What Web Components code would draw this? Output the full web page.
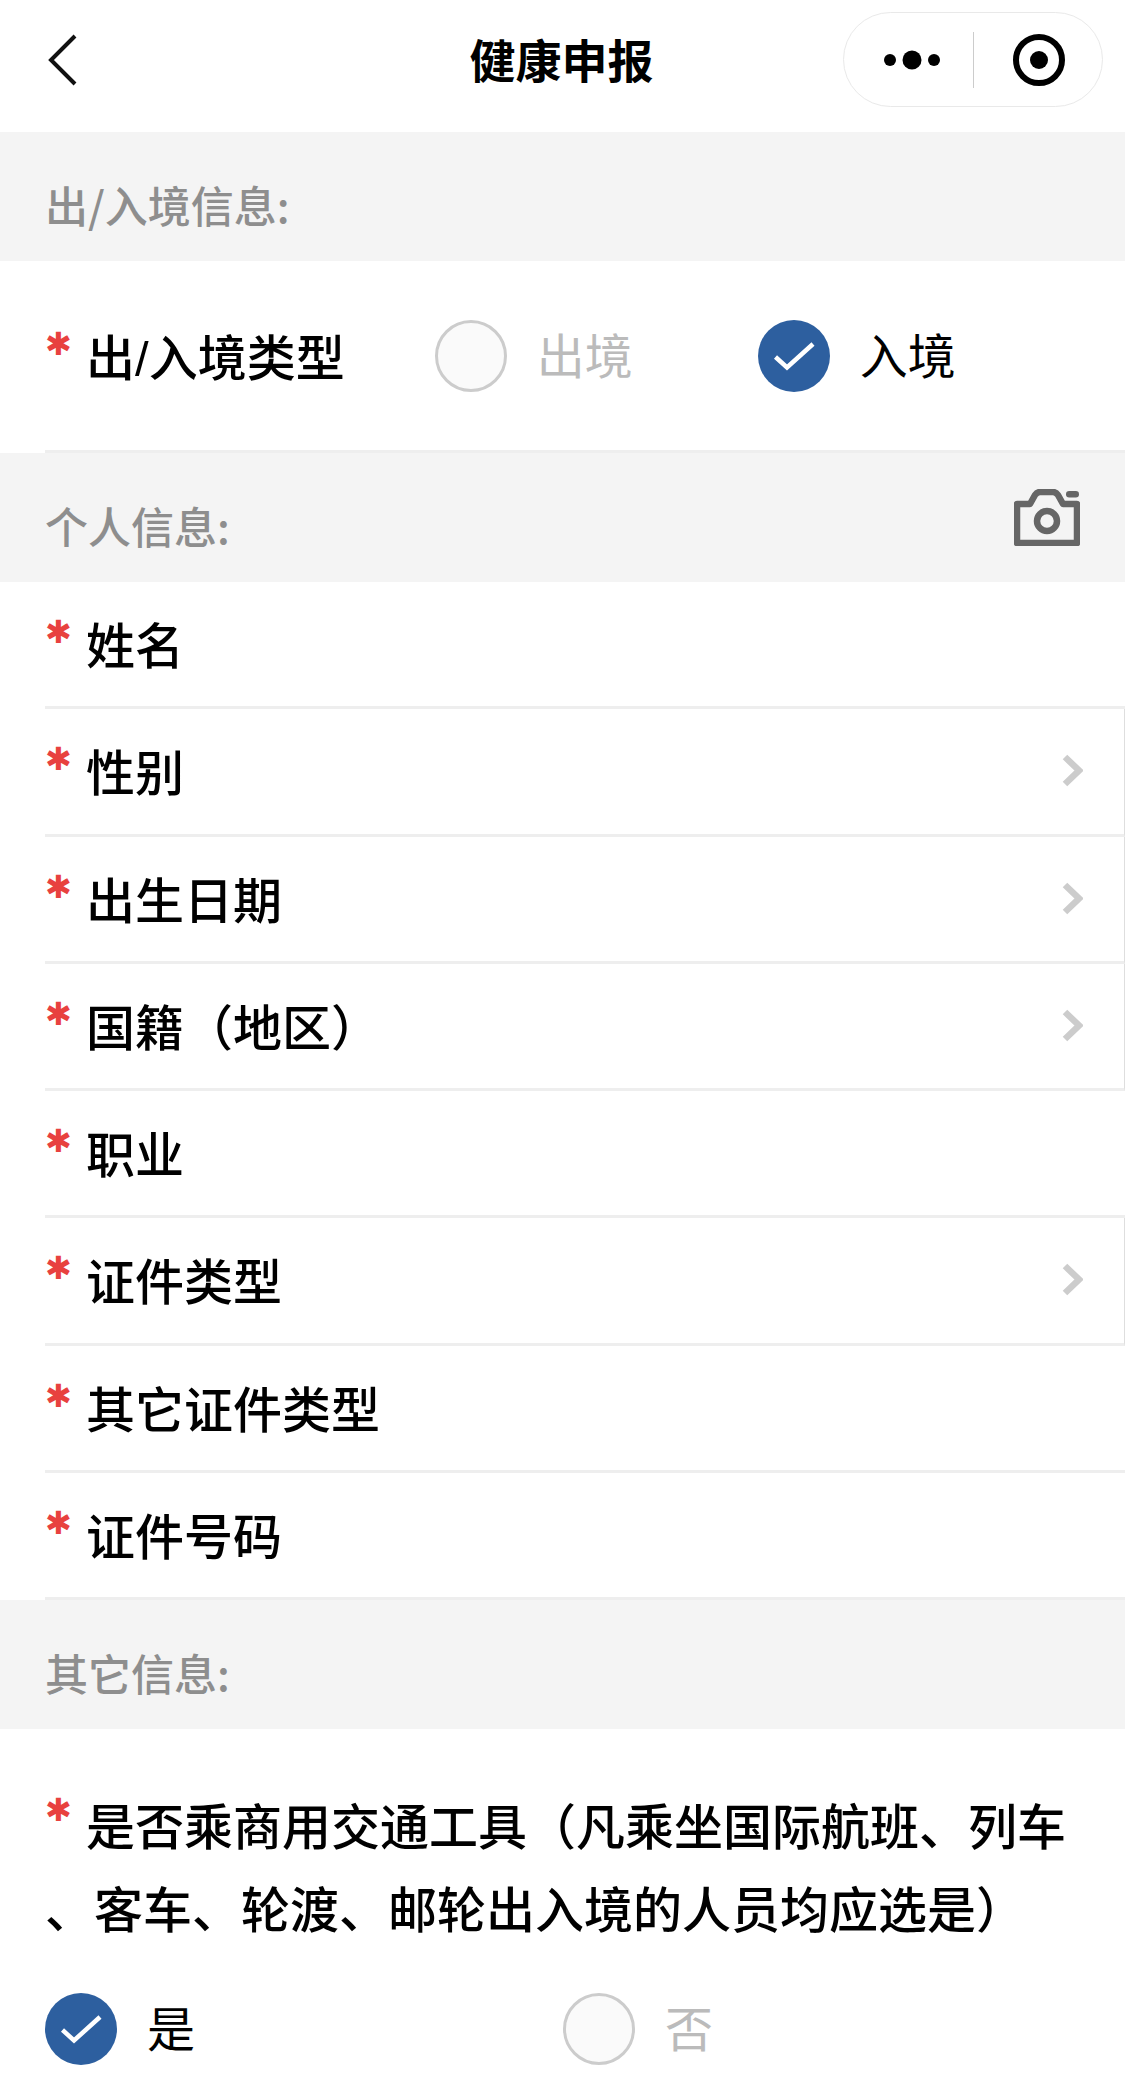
<!DOCTYPE html>
<html lang="zh-CN">
<head>
<meta charset="utf-8">
<style>
  html, body { margin: 0; padding: 0; background: #fff; }
  body {
    width: 1125px;
    height: 2083px;
    overflow: hidden;
    font-family: "Noto Sans CJK SC", "Liberation Sans", sans-serif;
    color: #000;
  }
</style>
</head>
<body>
<nav-bar>健康申报</nav-bar>

<section-title>出/入境信息:</section-title>
<choice-row>
  <span slot="label">出<span style="font-family:'Liberation Sans'">/</span>入境类型</span>
  <radio-option style="margin-left:90px;width:323px">出境</radio-option>
  <radio-option checked>入境</radio-option>
</choice-row>

<section-title camera>个人信息:</section-title>
<field-row>姓名</field-row>
<field-row arrow>性别</field-row>
<field-row arrow>出生日期</field-row>
<field-row arrow>国籍（地区）</field-row>
<field-row>职业</field-row>
<field-row arrow>证件类型</field-row>
<field-row>其它证件类型</field-row>
<field-row>证件号码</field-row>

<section-title>其它信息:</section-title>
<question-block>
  <span slot="first">是否乘商用交通工具（凡乘坐国际航班、列车</span>
  <span slot="second">、客车、轮渡、邮轮出入境的人员均应选是）</span>
  <radio-option checked style="width:518px">是</radio-option>
  <radio-option>否</radio-option>
</question-block>

<script>
  class NavBar extends HTMLElement {
    constructor() {
      super();
      this.attachShadow({ mode: 'open' });
      this.shadowRoot.innerHTML = `
        <style>
          :host { display: flex; position: relative; box-sizing: border-box; height: 132px; padding-top: 28px; background: #fff; justify-content: center; }
          .back { position: absolute; left: 47px; top: 34px; width: 32px; height: 52px; }
          .title { font-size: 46px; font-weight: 700; line-height: 60px; margin-left: -2px; }
          .capsule {
            position: absolute; left: 843px; top: 12px; width: 260px; height: 95px;
            box-sizing: border-box; border: 1px solid #e9e9e9; border-radius: 48px; padding-top: 1px;
            display: flex; align-items: center;
          }
          .capsule svg { display: block; }
          .sep { width: 1px; height: 56px; background: #ccc; }
        </style>
        <svg class="back" viewBox="0 0 32 52"><path d="M28 2 4 26l24 24" fill="none" stroke="#111" stroke-width="4"/></svg>
        <div class="title"><slot></slot></div>
        <div class="capsule">
          <svg style="margin-left:40px" width="56" height="20" viewBox="0 0 56 20"><circle cx="6" cy="10" r="6"/><circle cx="28" cy="10" r="9.500"/><circle cx="50" cy="10" r="6"/></svg>
          <div class="sep" style="margin-left:33px"></div>
          <svg style="margin-left:39px" width="52" height="52" viewBox="0 0 52 52"><circle cx="26" cy="26" r="23" fill="none" stroke="#000" stroke-width="6"/><circle cx="26" cy="26" r="9"/></svg>
        </div>
      `;
    }
  }
  customElements.define('nav-bar', NavBar);

  class SectionTitle extends HTMLElement {
    constructor() {
      super();
      this.attachShadow({ mode: 'open' });
      this.shadowRoot.innerHTML = `
        <style>
          :host { display: flex; align-items: center; justify-content: space-between; height: 129px; padding: 0 45px; background: #f4f4f4; color: #8e8e8e; font-size: 43px; font-weight: 500; }
          .text { margin-top: 14px; }
          svg { display: none; width: 66px; height: 57px; margin-top: 0; }
          :host([camera]) svg { display: block; }
        </style>
        <div class="text"><slot></slot></div>
        <svg viewBox="0 0 66 57">
          <path d="M3 15h13l5-9q2-3 5-3h13q3 0 5 3l5 9h14v39H3z" fill="none" stroke="#666" stroke-width="6.500" stroke-linejoin="round"/>
          <circle cx="33" cy="32" r="10" fill="none" stroke="#666" stroke-width="6.500"/>
          <rect x="52" y="2" width="13" height="6.500" rx="3.200" fill="#666"/>
        </svg>
      `;
    }
  }
  customElements.define('section-title', SectionTitle);

  class FieldRow extends HTMLElement {
    constructor() {
      super();
      this.attachShadow({ mode: 'open' });
      this.shadowRoot.innerHTML = `
        <style>
          :host { display: block; padding-left: 45px; background: #fff; }
          .row { display: flex; align-items: center; box-sizing: border-box; height: 127.250px; border-bottom: 3px solid #eeeeee; }
          :host([arrow]) .row { border-right: 1px solid #dedede; }
          .star { width: 41px; color: #e8413f; font: 700 32px/1 "DejaVu Sans", sans-serif; margin-top: -24px; }
          .label { flex: 1; font-size: 49px; font-weight: 500; margin-top: -3px; }
          svg { display: none; width: 21px; height: 33px; margin-right: 41px; margin-top: -1px; }
          :host([arrow]) svg { display: block; }
        </style>
        <div class="row">
          <span class="star">✱</span>
          <span class="label"><slot></slot></span>
          <svg viewBox="0 0 21 33"><path d="M3 3l14 13.500L3 30" fill="none" stroke="#ccc" stroke-width="6.500"/></svg>
        </div>
      `;
    }
  }
  customElements.define('field-row', FieldRow);

  class RadioOption extends HTMLElement {
    constructor() {
      super();
      this.attachShadow({ mode: 'open' });
      this.shadowRoot.innerHTML = `
        <style>
          :host { display: flex; align-items: center; gap: 30px; font-size: 48px; color: #bbb; }
          :host([checked]) { color: #000; }
          .dot { box-sizing: border-box; width: 72px; height: 72px; border-radius: 50%; border: 3px solid #ccc; background: #fafafa; flex: none; }
          :host([checked]) .dot { border: 0; background: #2d5f9f; }
          .txt { margin-top: -6px; }
          svg { display: none; width: 72px; height: 72px; }
          :host([checked]) svg { display: block; }
        </style>
        <div class="dot"><svg viewBox="0 0 72 72"><path d="M17.500 37 29 47.500 55 24" fill="none" stroke="#fff" stroke-width="4.500"/></svg></div>
        <span class="txt"><slot></slot></span>
      `;
    }
  }
  customElements.define('radio-option', RadioOption);

  class ChoiceRow extends HTMLElement {
    constructor() {
      super();
      this.attachShadow({ mode: 'open' });
      this.shadowRoot.innerHTML = `
        <style>
          :host { display: block; padding-left: 45px; background: #fff; }
          .row { display: flex; align-items: center; box-sizing: border-box; height: 192px; border-bottom: 3px solid #eeeeee; }
          .star { width: 41px; color: #e8413f; font: 700 32px/1 "DejaVu Sans", sans-serif; margin-top: -24px; }
          .label { font-size: 49px; font-weight: 500; margin-top: -3px; }
        </style>
        <div class="row">
          <span class="star">✱</span>
          <span class="label"><slot name="label"></slot></span>
          <slot></slot>
        </div>
      `;
    }
  }
  customElements.define('choice-row', ChoiceRow);

  class QuestionBlock extends HTMLElement {
    constructor() {
      super();
      this.attachShadow({ mode: 'open' });
      this.shadowRoot.innerHTML = `
        <style>
          :host { display: block; padding: 53px 0 0 45px; background: #fff; }
          .line { font-size: 49px; font-weight: 500; line-height: 83px; white-space: nowrap; display: flex; }
          .star { width: 41px; color: #e8413f; font: 700 32px/1 "DejaVu Sans", sans-serif; margin-top: 12px; }
          .opts { display: flex; margin-top: 45px; }
        </style>
        <div class="line"><span class="star">✱</span><slot name="first"></slot></div>
        <div class="line"><slot name="second"></slot></div>
        <div class="opts"><slot></slot></div>
      `;
    }
  }
  customElements.define('question-block', QuestionBlock);
</script>
</body>
</html>
